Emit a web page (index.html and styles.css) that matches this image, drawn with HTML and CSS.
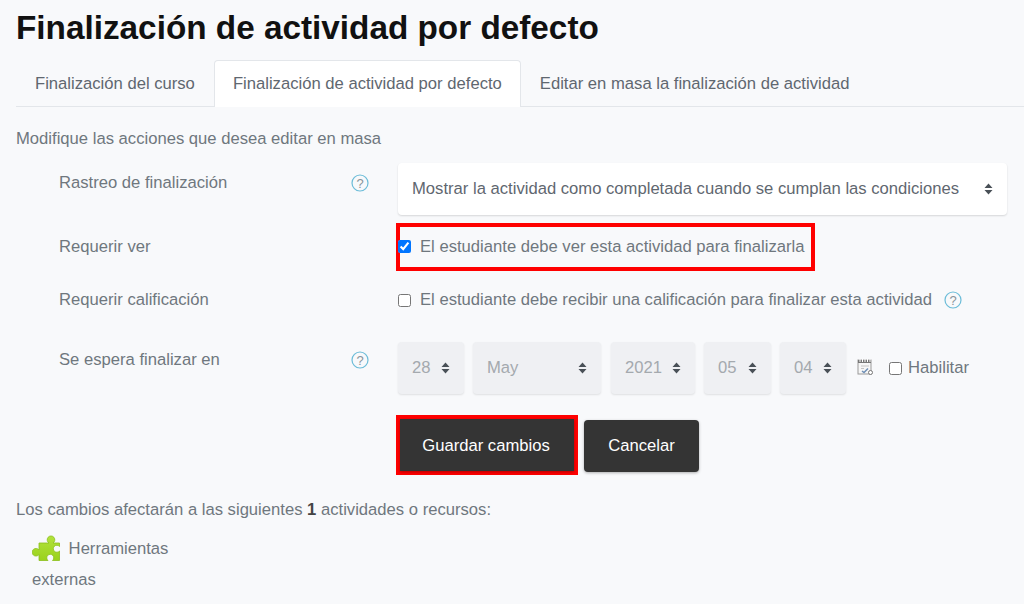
FILE: index.html
```html
<!DOCTYPE html>
<html lang="es">
  <head>
    <meta charset="UTF-8" />
    <title>Finalización de actividad por defecto</title>
    <link rel="stylesheet" href="styles.css">
  </head>
  <body>
    <h1>Finalización de actividad por defecto</h1>

    <div class="tabs">
      <a class="tab">Finalización del curso</a>
      <a class="tab active">Finalización de actividad por defecto</a>
      <a class="tab">Editar en masa la finalización de actividad</a>
    </div>

    <p class="intro">Modifique las acciones que desea editar en masa</p>

    <div class="form-row row-track">
      <label>Rastreo de finalización</label>
      <span class="help"><svg width="18" height="18" viewBox="0 0 18 18"><use href="#help-icon" /></svg></span>
      <div class="select select-wide">
        <span>Mostrar la actividad como completada cuando se cumplan las condiciones</span>
        <svg class="arrows" width="9" height="12" viewBox="0 0 9 12"><use href="#arrows-icon" /></svg>
      </div>
    </div>

    <div class="form-row row-view">
      <label>Requerir ver</label>
      <span class="help"></span>
      <div class="mark-box check-box">
        <input type="checkbox" checked />
        <span>El estudiante debe ver esta actividad para finalizarla</span>
      </div>
    </div>

    <div class="form-row row-grade">
      <label>Requerir calificación</label>
      <span class="help"></span>
      <div class="check-line">
        <input type="checkbox" />
        <span>El estudiante debe recibir una calificación para finalizar esta actividad</span>
        <svg class="help-inline" width="18" height="18" viewBox="0 0 18 18"><use href="#help-icon" /></svg>
      </div>
    </div>

    <div class="form-row row-date">
      <label>Se espera finalizar en</label>
      <span class="help"><svg width="18" height="18" viewBox="0 0 18 18"><use href="#help-icon" /></svg></span>
      <div class="date-line">
        <div class="select disabled w-day"><span>28</span><svg class="arrows" width="9" height="12" viewBox="0 0 9 12"><use href="#arrows-icon" /></svg></div>
        <div class="select disabled w-month"><span>May</span><svg class="arrows" width="9" height="12" viewBox="0 0 9 12"><use href="#arrows-icon" /></svg></div>
        <div class="select disabled w-year"><span>2021</span><svg class="arrows" width="9" height="12" viewBox="0 0 9 12"><use href="#arrows-icon" /></svg></div>
        <div class="select disabled w-hour"><span>05</span><svg class="arrows" width="9" height="12" viewBox="0 0 9 12"><use href="#arrows-icon" /></svg></div>
        <div class="select disabled w-min"><span>04</span><svg class="arrows" width="9" height="12" viewBox="0 0 9 12"><use href="#arrows-icon" /></svg></div>
        <svg class="calendar" width="17" height="18" viewBox="0 0 17 18">
          <rect x="1" y="2" width="13" height="14" fill="#f6f6f6" stroke="#9a9a9a" />
          <path d="M1 2h13v3H1z" fill="#777" />
          <path d="M3 1v3M5.500 1v3M8 1v3M10.500 1v3M13 1v3" stroke="#fff" />
          <path d="M4 8h8M4 10.500h3" stroke="#c4c4c4" />
          <path d="M5 13l2 1.500 4-4" fill="none" stroke="#6f8fb5" stroke-width="1.500" />
          <circle cx="13.500" cy="14.500" r="2" fill="#fff" stroke="#777" />
        </svg>
        <label class="enable"><input type="checkbox" /> Habilitar</label>
      </div>
    </div>

    <div class="actions">
      <div class="mark-box save-box"><button>Guardar cambios</button></div>
      <button class="cancel">Cancelar</button>
    </div>

    <p class="affected">Los cambios afectarán a las siguientes <b>1</b> actividades o recursos:</p>

    <div class="activity">
      <svg width="28" height="28" viewBox="0 0 28 28">
        <path d="M7 9H17A3.800 3.800 0 1 1 21 9H27.500V12.500A3.500 3.500 0 1 0 27.500 17V26.500H20.500A3.500 3.500 0 1 0 16 26.500H7V20.500A3.800 3.800 0 1 1 7 16z" fill="url(#puzzle-fill)" stroke="#8cbf1c" stroke-width="0.800" />
      </svg>
      Herramientas externas
    </div>

    <svg class="defs" width="0" height="0">
      <defs>
        <linearGradient id="puzzle-fill" x1="0" y1="0" x2="0" y2="1">
          <stop offset="0" stop-color="#b2e23c" />
          <stop offset="1" stop-color="#9ad21c" />
        </linearGradient>
        <g id="help-icon">
          <circle cx="9" cy="9" r="8" fill="none" stroke="#6bbcd8" stroke-width="1.200" />
          <text x="9" y="13.500" text-anchor="middle" font-size="13" font-family="Liberation Sans, sans-serif" fill="#87949c">?</text>
        </g>
        <g id="arrows-icon">
          <path d="M4.500 0.500L8.500 5H0.500zM0.500 7H8.500L4.500 11.500z" fill="#495057" />
        </g>
      </defs>
    </svg>
  </body>
</html>
```

FILE: styles.css
```css
body {
  margin: 0;
  padding: 0 0 0 16px;
  height: 604px;
  overflow: hidden;
  box-sizing: border-box;
  background-color: #f8f9fb;
  color: #6f777e;
  font-family: "Liberation Sans", Arial, sans-serif;
  font-size: 16.640px;
}
h1 {
  margin: 0;
  padding-top: 9px;
  height: 60px;
  box-sizing: border-box;
  color: #111;
  font-size: 33.300px;
  line-height: 38px;
  font-weight: bold;
}
.tabs {
  display: flex;
  height: 47px;
  box-sizing: border-box;
  border-bottom: 1px solid #e3e6ea;
}
.tab {
  padding: 15px 19px 0;
  height: 47px;
  box-sizing: border-box;
  color: #5f6770;
  line-height: 18px;
}
.tab.active {
  background-color: #fff;
  border: 1px solid #e3e6ea;
  border-bottom: none;
  border-radius: 4px 4px 0 0;
  padding: 14px 18px 0;
}
.intro {
  margin: 23px 0 0;
  line-height: 18px;
}
.form-row {
  display: flex;
  padding-left: 43px;
}
.form-row > label {
  width: 292px;
  line-height: 18px;
}
.help {
  width: 47px;
  flex: none;
}
.row-track {
  margin-top: 15px;
  height: 52px;
}
.row-track > label {
  padding-top: 11px;
}
.row-track .help {
  padding-top: 11px;
}
.select {
  display: flex;
  align-items: center;
  justify-content: space-between;
  box-sizing: border-box;
  background-color: #fff;
  border-radius: 4px;
  box-shadow: 0 1px 2px rgba(0, 0, 0, 0.14);
  color: #5f6770;
}
.select-wide {
  width: 609px;
  height: 52px;
  padding: 0 14px;
}
.row-view {
  height: 56px;
  padding-top: 8px;
  box-sizing: border-box;
}
.row-view > label {
  padding-top: 15px;
}
.mark-box {
  border: 4px solid #f00;
  box-sizing: border-box;
}
.check-box {
  display: flex;
  align-items: center;
  margin-left: -2px;
  width: 419px;
  height: 48px;
}
input[type="checkbox"] {
  margin: 0;
  width: 13px;
  height: 13px;
}
.check-box input {
  margin: -2px 0 0 -2px;
}
.check-box span {
  margin-left: 9px;
}
.row-grade {
  height: 56px;
  padding-top: 20px;
  box-sizing: border-box;
}
.check-line {
  display: flex;
  align-items: center;
  height: 18px;
}
.check-line span {
  margin-left: 9px;
}
.help-inline {
  margin-left: 12px;
}
.row-date {
  height: 60px;
  padding-top: 15px;
  box-sizing: border-box;
}
.row-date > label {
  padding-top: 9px;
}
.row-date .help {
  padding-top: 9px;
}
.date-line {
  display: flex;
  align-items: flex-start;
  gap: 9px;
}
.select.disabled {
  height: 52px;
  padding: 0 14px;
  background-color: #eff0f3;
  color: #a4a9ae;
  box-shadow: 0 1px 2px rgba(0, 0, 0, 0.1);
}
.w-day { width: 66px; }
.w-month { width: 128px; }
.w-year { width: 84px; margin-left: 1px; }
.w-hour { width: 67px; }
.w-min { width: 66px; }
.calendar {
  margin-top: 16px;
  margin-left: 2px;
}
.enable {
  display: flex;
  align-items: center;
  gap: 6px;
  margin-left: 6px;
  margin-top: 17px;
  line-height: 18px;
}
.actions {
  display: flex;
  align-items: flex-start;
  margin-top: 28px;
  margin-left: 380px;
}
.save-box {
  width: 182px;
  height: 60px;
}
button {
  background-color: #343434;
  color: #fff;
  border: none;
  border-radius: 4px;
  font-family: inherit;
  font-size: 16.640px;
  height: 52px;
  padding: 0;
  box-shadow: 0 1px 3px rgba(0, 0, 0, 0.3);
}
.save-box button {
  width: 174px;
  padding: 2px 2px 0 0;
  border-radius: 0;
}
.cancel {
  width: 115px;
  margin-left: 6px;
  margin-top: 5px;
}
.affected {
  margin: 26px 0 0;
  line-height: 18px;
}
.affected b {
  color: #444;
}
.activity {
  width: 160px;
  margin-top: 14px;
  margin-left: 16px;
  line-height: 31px;
}
.activity svg {
  vertical-align: middle;
  margin-right: 4px;
  transform: translateY(-2px);
}
.defs {
  position: absolute;
}
```
